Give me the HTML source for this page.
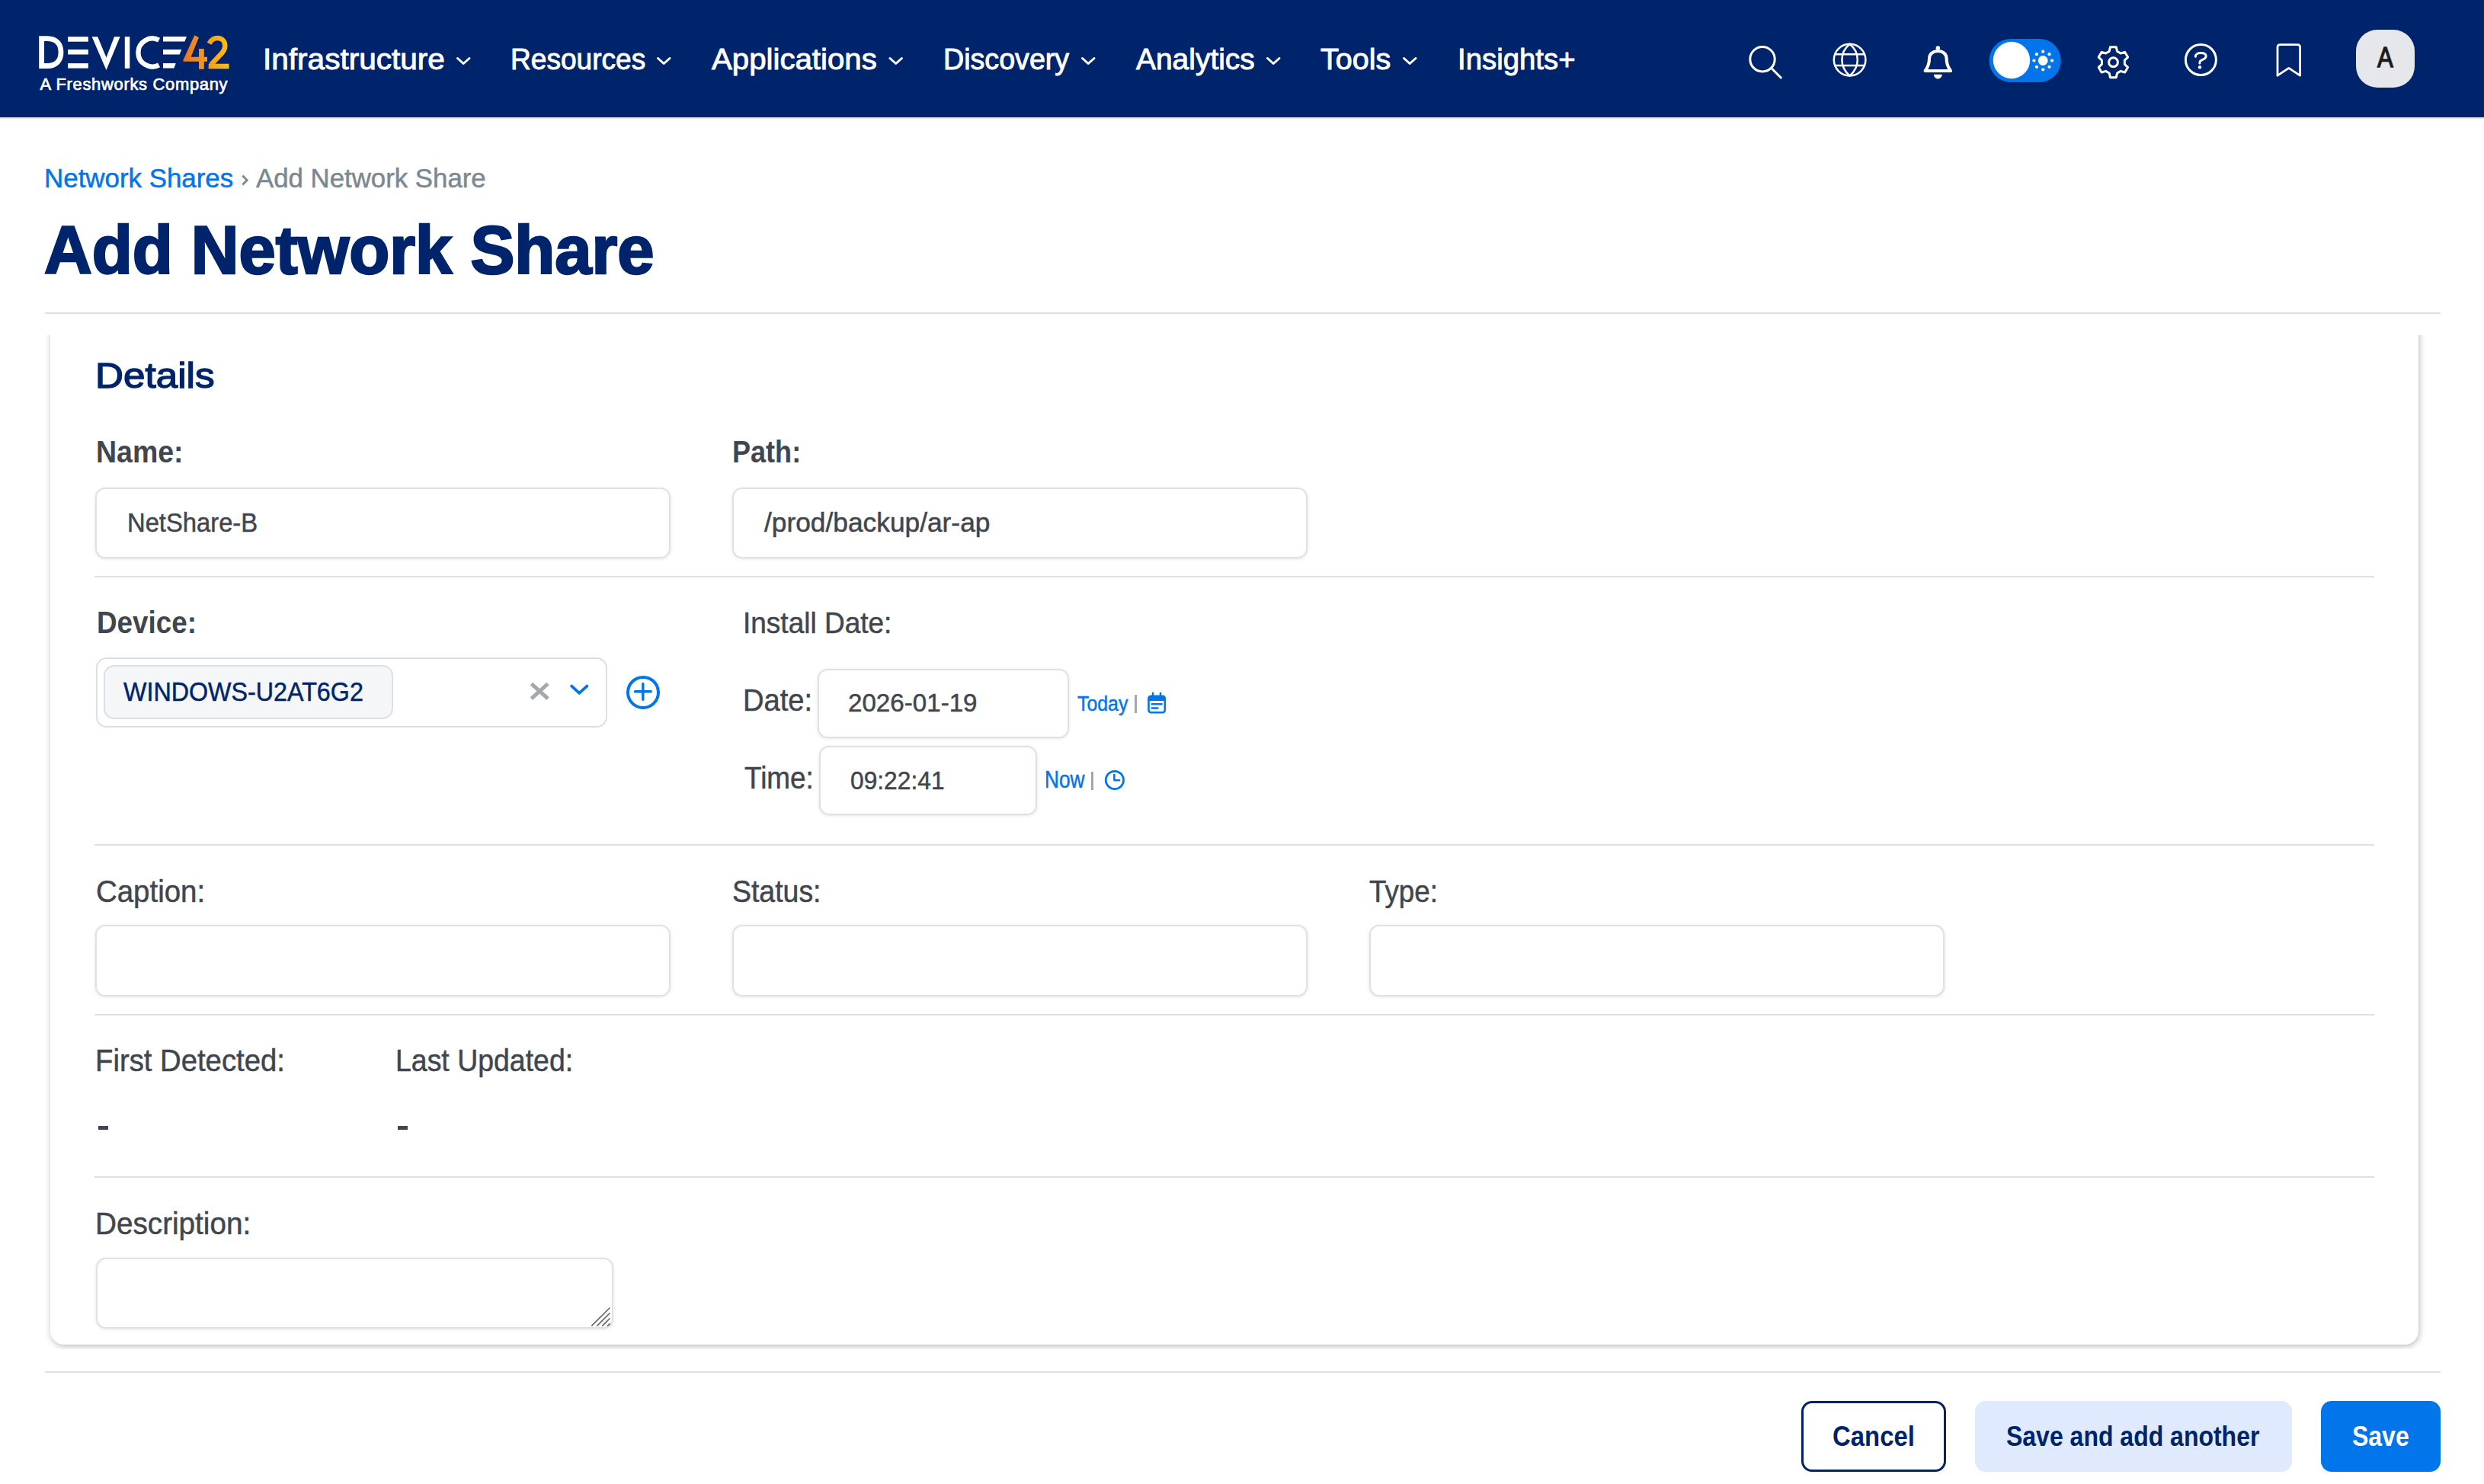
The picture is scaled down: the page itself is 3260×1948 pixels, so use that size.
<!DOCTYPE html>
<html><head><meta charset="utf-8"><title>Add Network Share</title>
<style>
html,body{margin:0;padding:0;width:3260px;height:1948px;overflow:hidden;background:#fff;}
body{position:relative;font-family:"Liberation Sans",sans-serif;}
.t{position:absolute;line-height:0;white-space:pre;transform-origin:0 0;}
.b{position:absolute;box-sizing:border-box;}
#nav{left:0;top:0;width:3260px;height:156px;background:#00246b;border-bottom:2px solid #e3e6ea;}
.hr{position:absolute;height:2px;background:#dde1e6;}
#clip{left:59px;top:440px;width:3144px;height:1331px;overflow:hidden;}
#card{position:absolute;left:7px;top:-60px;width:3108px;height:1385px;background:#fff;border-radius:18px;box-shadow:1px 2px 8px rgba(0,0,0,0.28);}
.inp{position:absolute;box-sizing:border-box;border:2px solid #e1e1e1;border-radius:13px;background:#fff;box-shadow:0 1px 4px rgba(0,0,0,0.10);}
.rule{position:absolute;left:124px;width:2992px;height:2px;background:#dde1e6;}
svg{position:absolute;left:0;top:0;overflow:visible;}
@media (max-width:2400px){html{zoom:0.5;}}
</style></head>
<body>
<div id="nav" class="b"></div>
<div class="hr" style="left:59px;top:410px;width:3144px;"></div>
<div id="clip" class="b"><div id="card"></div></div>
<div class="rule" style="top:756px"></div>
<div class="rule" style="top:1108px"></div>
<div class="rule" style="top:1331px"></div>
<div class="rule" style="top:1544px"></div>
<div class="hr" style="left:59px;top:1800px;width:3144px;"></div>

<!-- inputs -->
<div class="inp" style="left:125px;top:640px;width:755px;height:93px"></div>
<div class="inp" style="left:961px;top:640px;width:755px;height:93px"></div>
<div class="b" style="left:126px;top:863px;width:671px;height:92px;border:2px solid #dcdfe4;border-radius:14px;"></div>
<div class="b" style="left:136px;top:873px;width:380px;height:71px;border:2px solid #dcdfe4;border-radius:14px;background:#f5f6f8"></div>
<div class="inp" style="left:1073px;top:878px;width:330px;height:91px"></div>
<div class="inp" style="left:1075px;top:979px;width:286px;height:91px"></div>
<div class="inp" style="left:125px;top:1214px;width:755px;height:94px"></div>
<div class="inp" style="left:961px;top:1214px;width:755px;height:94px"></div>
<div class="inp" style="left:1797px;top:1214px;width:755px;height:94px"></div>
<div class="inp" style="left:126px;top:1651px;width:679px;height:93px"></div>
<div class="b" style="left:128.6px;top:1478.4px;width:13px;height:4.6px;background:#40454e"></div>
<div class="b" style="left:522px;top:1478.4px;width:13px;height:4.6px;background:#40454e"></div>
<div class="b" style="left:1489px;top:912px;width:3px;height:24px;background:#a2a8ae"></div>
<div class="b" style="left:1432px;top:1013px;width:3px;height:24px;background:#a2a8ae"></div>

<!-- buttons -->
<div class="b" style="left:2364px;top:1839px;width:190px;height:93px;border:3px solid #00246b;border-radius:14px;"></div>
<div class="b" style="left:2592px;top:1839px;width:416px;height:93px;background:#dfeafe;border-radius:14px;"></div>
<div class="b" style="left:3046px;top:1839px;width:157px;height:93px;background:#0275ea;border-radius:14px;"></div>
<div class="b" style="left:3092px;top:38.7px;width:77.3px;height:76.3px;background:#e5e7eb;border-radius:28px;"></div>

<svg width="3260" height="1948" viewBox="0 0 3260 1948">
<defs>
<linearGradient id="g42" x1="240" y1="0" x2="302" y2="0" gradientUnits="userSpaceOnUse">
<stop offset="0" stop-color="#ee7424"/><stop offset="1" stop-color="#fbc213"/></linearGradient>
</defs>
<!-- logo -->
<g fill="#fff">
<path d="M54.6,50.6 H62 C74.5,50.6 80,58.5 80,68.6 C80,78.7 74.5,86.5 62,86.5 H54.6 Z" fill="none" stroke="#fff" stroke-width="6.8"/>
<rect x="89.1" y="48.2" width="26.7" height="6.5"/>
<rect x="89.1" y="65" width="26.7" height="6.5"/>
<rect x="89.1" y="83.1" width="26.7" height="6.5"/>
<polygon points="120.6,48.2 128.2,48.2 139.5,75.6 150,48.2 157.6,48.2 139.5,92"/>
<rect x="163.8" y="48.2" width="6.5" height="41.6"/>
<path d="M208.59,52.67 A18.5,18.5 0 1 0 208.59,85.33" fill="none" stroke="#fff" stroke-width="6.4"/>
<polygon points="214,48 245,48 242.4,54.6 214,54.6"/>
<polygon points="214,65 238.2,65 235.7,71.5 214,71.5"/>
<polygon points="214,83.1 230.8,83.1 228.4,89.6 214,89.6"/>
</g>
<g fill="url(#g42)">
<polygon points="255.3,46.3 261,49.1 250.6,74.7 261,74.7 261,64.1 267.8,64.1 267.8,74.7 272,74.7 272,80.8 267.8,80.8 267.8,90.7 261,90.7 261,80.8 240.5,80.8 240.5,78.8"/>
<path d="M274.6,57.2 C277.2,52 281.5,50 285.6,50 C291.5,50 295.3,54.5 295.3,60.2 C295.3,64.8 292.8,68.2 289.3,71.8 L276.8,85" fill="none" stroke="url(#g42)" stroke-width="6.5"/>
<rect x="273.7" y="83.7" width="26.8" height="6.6"/>
</g>
<!-- nav chevrons -->
<g fill="none" stroke="#fff" stroke-width="3" stroke-linecap="round" stroke-linejoin="round">
<path d="M600.5,76.5 L608.2,83.5 L616,76.5"/>
<path d="M863.5,76.5 L871.2,83.5 L879,76.5"/>
<path d="M1168,76.5 L1175.7,83.5 L1183.5,76.5"/>
<path d="M1420.5,76.5 L1428.2,83.5 L1436,76.5"/>
<path d="M1663.5,76.5 L1671.2,83.5 L1679,76.5"/>
<path d="M1842.5,76.5 L1850.2,83.5 L1858,76.5"/>
</g>
<!-- nav icons -->
<g fill="none" stroke="#fff" stroke-width="3" stroke-linecap="round" stroke-linejoin="round">
<circle cx="2313" cy="77.7" r="16.2"/>
<path d="M2325,89.7 L2337.3,102"/>
<g stroke-width="2.5"><circle cx="2427.6" cy="78.6" r="20.8"/>
<path d="M2427.6,57.8 C2420.6,63.5 2417.4,70.5 2417.4,78.6 C2417.4,86.7 2420.6,93.7 2427.6,99.4 C2434.6,93.7 2437.8,86.7 2437.8,78.6 C2437.8,70.5 2434.6,63.5 2427.6,57.8"/>
<path d="M2409,71.2 H2446.2 M2409,86.1 H2446.2"/></g>
<path d="M2526.6,93 C2530.6,87.5 2532,83 2532,77 C2532,70.8 2537,67 2543.3,67 C2549.6,67 2554.6,70.8 2554.6,77 C2554.6,83 2556,87.5 2560,93 Z" stroke-width="4.1"/>
<circle cx="2888.4" cy="78.5" r="20"/>
<path d="M2881.4,74.3 C2881.4,71.3 2884.5,69.6 2888.2,69.6 C2892,69.6 2895.2,71 2895.2,73.8 C2895.2,77 2891.5,78 2889,79.2 C2887.6,79.9 2886.9,80.8 2886.9,82.3 V83"/>
<path d="M2989,99.2 V62 Q2989,58.6 2992.4,58.6 H3015.2 Q3018.6,58.6 3018.6,62 V99.2 L3003.8,89.3 Z" stroke-width="2.8"/>
</g>
<g fill="#fff">
<circle cx="2543.3" cy="63" r="2.8"/>
<path d="M2537.9,97.8 A5.45,5.6 0 0 0 2548.8,97.8 Z"/>
<circle cx="2887" cy="88.2" r="2.2"/>
</g>
<path id="gear" fill="none" stroke="#fff" stroke-width="3" stroke-linejoin="round" d="M2768.20,67.42 L2769.53,61.77 L2777.27,61.77 L2778.60,67.42 L2783.17,70.06 L2788.72,68.38 L2792.59,75.09 L2788.37,79.06 L2788.37,84.34 L2792.59,88.31 L2788.72,95.02 L2783.17,93.34 L2778.60,95.98 L2777.27,101.63 L2769.53,101.63 L2768.20,95.98 L2763.63,93.34 L2758.08,95.02 L2754.21,88.31 L2758.43,84.34 L2758.43,79.06 L2754.21,75.09 L2758.08,68.38 L2763.63,70.06 Z"/>
<circle cx="2773.5" cy="81.7" r="5.9" fill="none" stroke="#fff" stroke-width="3"/>
<!-- toggle -->
<rect x="2610.6" y="50.9" width="94.2" height="57.1" rx="28.5" fill="#0275ea"/>
<circle cx="2640" cy="79" r="24.2" fill="#fff"/>
<g fill="#fff">
<circle cx="2681.2" cy="79.5" r="6.4"/>
<circle cx="2681.2" cy="67.7" r="2.1"/><circle cx="2681.2" cy="91.3" r="2.1"/>
<circle cx="2669.4" cy="79.5" r="2.1"/><circle cx="2693" cy="79.5" r="2.1"/>
<circle cx="2672.9" cy="71.2" r="2.1"/><circle cx="2689.5" cy="71.2" r="2.1"/>
<circle cx="2672.9" cy="87.8" r="2.1"/><circle cx="2689.5" cy="87.8" r="2.1"/>
</g>
<!-- device icons -->
<path d="M699.2,899.2 L717.2,915.4 M717.2,899.2 L699.2,915.4" stroke="#a4a9b0" stroke-width="5" stroke-linecap="square"/>
<path d="M750.3,900.6 L760.3,909.8 L770.3,900.6" fill="none" stroke="#0275ea" stroke-width="3.8" stroke-linecap="round" stroke-linejoin="round"/>
<circle cx="844" cy="908.9" r="20" fill="none" stroke="#0275ea" stroke-width="4"/>
<path d="M833.5,907.8 H854.3 M843.8,897.5 V918.3" stroke="#0275ea" stroke-width="3.4" stroke-linecap="round"/>
<!-- calendar -->
<rect x="1507.5" y="913.8" width="21.3" height="21.4" rx="3" fill="none" stroke="#0275ea" stroke-width="2.6"/>
<rect x="1507.5" y="913.8" width="21.3" height="6.2" fill="#0275ea"/>
<path d="M1513,909.8 V914 M1523,909.8 V914 M1511.8,924.3 H1524.6 M1511.8,929.4 H1519.5" stroke="#0275ea" stroke-width="2.5" stroke-linecap="round"/>
<!-- clock -->
<circle cx="1462.9" cy="1024" r="11.7" fill="none" stroke="#0275ea" stroke-width="2.7"/>
<path d="M1462.4,1017 V1024.3 H1469" fill="none" stroke="#0275ea" stroke-width="2.6" stroke-linecap="round" stroke-linejoin="round"/>
<!-- breadcrumb chevron -->
<path d="M318.3,230.6 L324.2,236.5 L318.3,242.4" fill="none" stroke="#7b8893" stroke-width="2.8"/>
<!-- resizer -->
<path d="M776.8,1740.2 L800,1717 M783.8,1740.2 L800,1724 M790.8,1740.2 L800,1731 M797.6,1740.2 L800,1738" stroke="#676767" stroke-width="1.7" stroke-linecap="round"/>
</svg>
<div class="t" style="left:52.55px;top:110.54px;font-size:21.95px;color:#ffffff;-webkit-text-stroke:0.7px #ffffff;letter-spacing:0.691px;">A Freshworks Company</div>
<div class="t" style="left:344.70px;top:78.25px;font-size:38.08px;color:#ffffff;transform:scaleX(1.0650);-webkit-text-stroke:0.9px #ffffff;">Infrastructure</div>
<div class="t" style="left:670.08px;top:78.25px;font-size:38.08px;color:#ffffff;transform:scaleX(0.9738);-webkit-text-stroke:0.9px #ffffff;">Resources</div>
<div class="t" style="left:933.95px;top:78.25px;font-size:38.08px;color:#ffffff;transform:scaleX(1.0558);-webkit-text-stroke:0.9px #ffffff;">Applications</div>
<div class="t" style="left:1237.94px;top:78.25px;font-size:38.08px;color:#ffffff;transform:scaleX(0.9882);-webkit-text-stroke:0.9px #ffffff;">Discovery</div>
<div class="t" style="left:1491.45px;top:78.25px;font-size:38.08px;color:#ffffff;transform:scaleX(1.0225);-webkit-text-stroke:0.9px #ffffff;">Analytics</div>
<div class="t" style="left:1733.46px;top:78.25px;font-size:38.08px;color:#ffffff;transform:scaleX(1.0377);-webkit-text-stroke:0.9px #ffffff;">Tools</div>
<div class="t" style="left:1912.80px;top:78.25px;font-size:38.08px;color:#ffffff;transform:scaleX(1.0072);-webkit-text-stroke:0.9px #ffffff;">Insights+</div>
<div class="t" style="left:3119.65px;top:75.45px;font-size:37.79px;color:#1b1b1b;transform:scaleX(0.8237);-webkit-text-stroke:1.3px #1b1b1b;">A</div>
<div class="t" style="left:58.06px;top:234.06px;font-size:34.88px;color:#0275ea;-webkit-text-stroke:0.5px #0275ea;">Network Shares</div>
<div class="t" style="left:336.05px;top:234.06px;font-size:34.88px;color:#7b8893;transform:scaleX(0.9977);-webkit-text-stroke:0.5px #7b8893;">Add Network Share</div>
<div class="t" style="left:58.13px;top:328.61px;font-size:88.81px;color:#00246b;font-weight:700;transform:scaleX(0.9775);-webkit-text-stroke:2.6px #00246b;">Add Network Share</div>
<div class="t" style="left:124.60px;top:492.77px;font-size:47.09px;color:#00246b;transform:scaleX(1.0877);-webkit-text-stroke:1.4px #00246b;">Details</div>
<div class="t" style="left:126.46px;top:593.89px;font-size:40.12px;color:#40454e;font-weight:700;transform:scaleX(0.9342);">Name:</div>
<div class="t" style="left:961.46px;top:593.89px;font-size:40.12px;color:#40454e;font-weight:700;transform:scaleX(0.8989);">Path:</div>
<div class="t" style="left:166.63px;top:685.76px;font-size:34.88px;color:#40454e;transform:scaleX(0.9390);-webkit-text-stroke:0.5px #40454e;">NetShare-B</div>
<div class="t" style="left:1003.25px;top:685.76px;font-size:34.88px;color:#40454e;transform:scaleX(1.0125);-webkit-text-stroke:0.5px #40454e;">/prod/backup/ar-ap</div>
<div class="t" style="left:126.50px;top:816.84px;font-size:41.13px;color:#40454e;font-weight:700;transform:scaleX(0.8958);">Device:</div>
<div class="t" style="left:162.39px;top:907.61px;font-size:35.03px;color:#00246b;transform:scaleX(0.9213);-webkit-text-stroke:0.5px #00246b;">WINDOWS-U2AT6G2</div>
<div class="t" style="left:974.62px;top:817.09px;font-size:39.39px;color:#40454e;transform:scaleX(0.9398);-webkit-text-stroke:0.5px #40454e;">Install Date:</div>
<div class="t" style="left:974.90px;top:919.14px;font-size:40.99px;color:#40454e;transform:scaleX(0.9307);-webkit-text-stroke:0.5px #40454e;">Date:</div>
<div class="t" style="left:1112.59px;top:923.11px;font-size:33.29px;color:#40454e;transform:scaleX(0.9959);-webkit-text-stroke:0.5px #40454e;">2026-01-19</div>
<div class="t" style="left:1413.95px;top:923.73px;font-size:27.76px;color:#0275ea;transform:scaleX(0.8958);-webkit-text-stroke:0.5px #0275ea;">Today</div>
<div class="t" style="left:977.21px;top:1020.59px;font-size:40.84px;color:#40454e;transform:scaleX(0.9033);-webkit-text-stroke:0.5px #40454e;">Time:</div>
<div class="t" style="left:1115.68px;top:1024.36px;font-size:34.01px;color:#40454e;transform:scaleX(0.9334);-webkit-text-stroke:0.5px #40454e;">09:22:41</div>
<div class="t" style="left:1371.15px;top:1024.42px;font-size:31.25px;color:#0275ea;transform:scaleX(0.8395);-webkit-text-stroke:0.5px #0275ea;">Now</div>
<div class="t" style="left:126.03px;top:1169.99px;font-size:40.84px;color:#40454e;transform:scaleX(0.9410);-webkit-text-stroke:0.5px #40454e;">Caption:</div>
<div class="t" style="left:960.66px;top:1169.99px;font-size:40.84px;color:#40454e;transform:scaleX(0.9168);-webkit-text-stroke:0.5px #40454e;">Status:</div>
<div class="t" style="left:1797.01px;top:1169.99px;font-size:40.84px;color:#40454e;transform:scaleX(0.9018);-webkit-text-stroke:0.5px #40454e;">Type:</div>
<div class="t" style="left:124.99px;top:1392.29px;font-size:39.97px;color:#40454e;transform:scaleX(0.9576);-webkit-text-stroke:0.5px #40454e;">First Detected:</div>
<div class="t" style="left:519.25px;top:1392.29px;font-size:39.97px;color:#40454e;transform:scaleX(0.9367);-webkit-text-stroke:0.5px #40454e;">Last Updated:</div>
<div class="t" style="left:125.15px;top:1606.09px;font-size:40.55px;color:#40454e;transform:scaleX(0.9540);-webkit-text-stroke:0.5px #40454e;">Description:</div>
<div class="t" style="left:2404.98px;top:1886.35px;font-size:36.48px;color:#00246b;font-weight:700;transform:scaleX(0.9018);">Cancel</div>
<div class="t" style="left:2633.34px;top:1886.35px;font-size:36.48px;color:#00246b;font-weight:700;transform:scaleX(0.8771);">Save and add another</div>
<div class="t" style="left:3087.44px;top:1886.35px;font-size:36.48px;color:#ffffff;font-weight:700;transform:scaleX(0.8766);">Save</div>

</body></html>
